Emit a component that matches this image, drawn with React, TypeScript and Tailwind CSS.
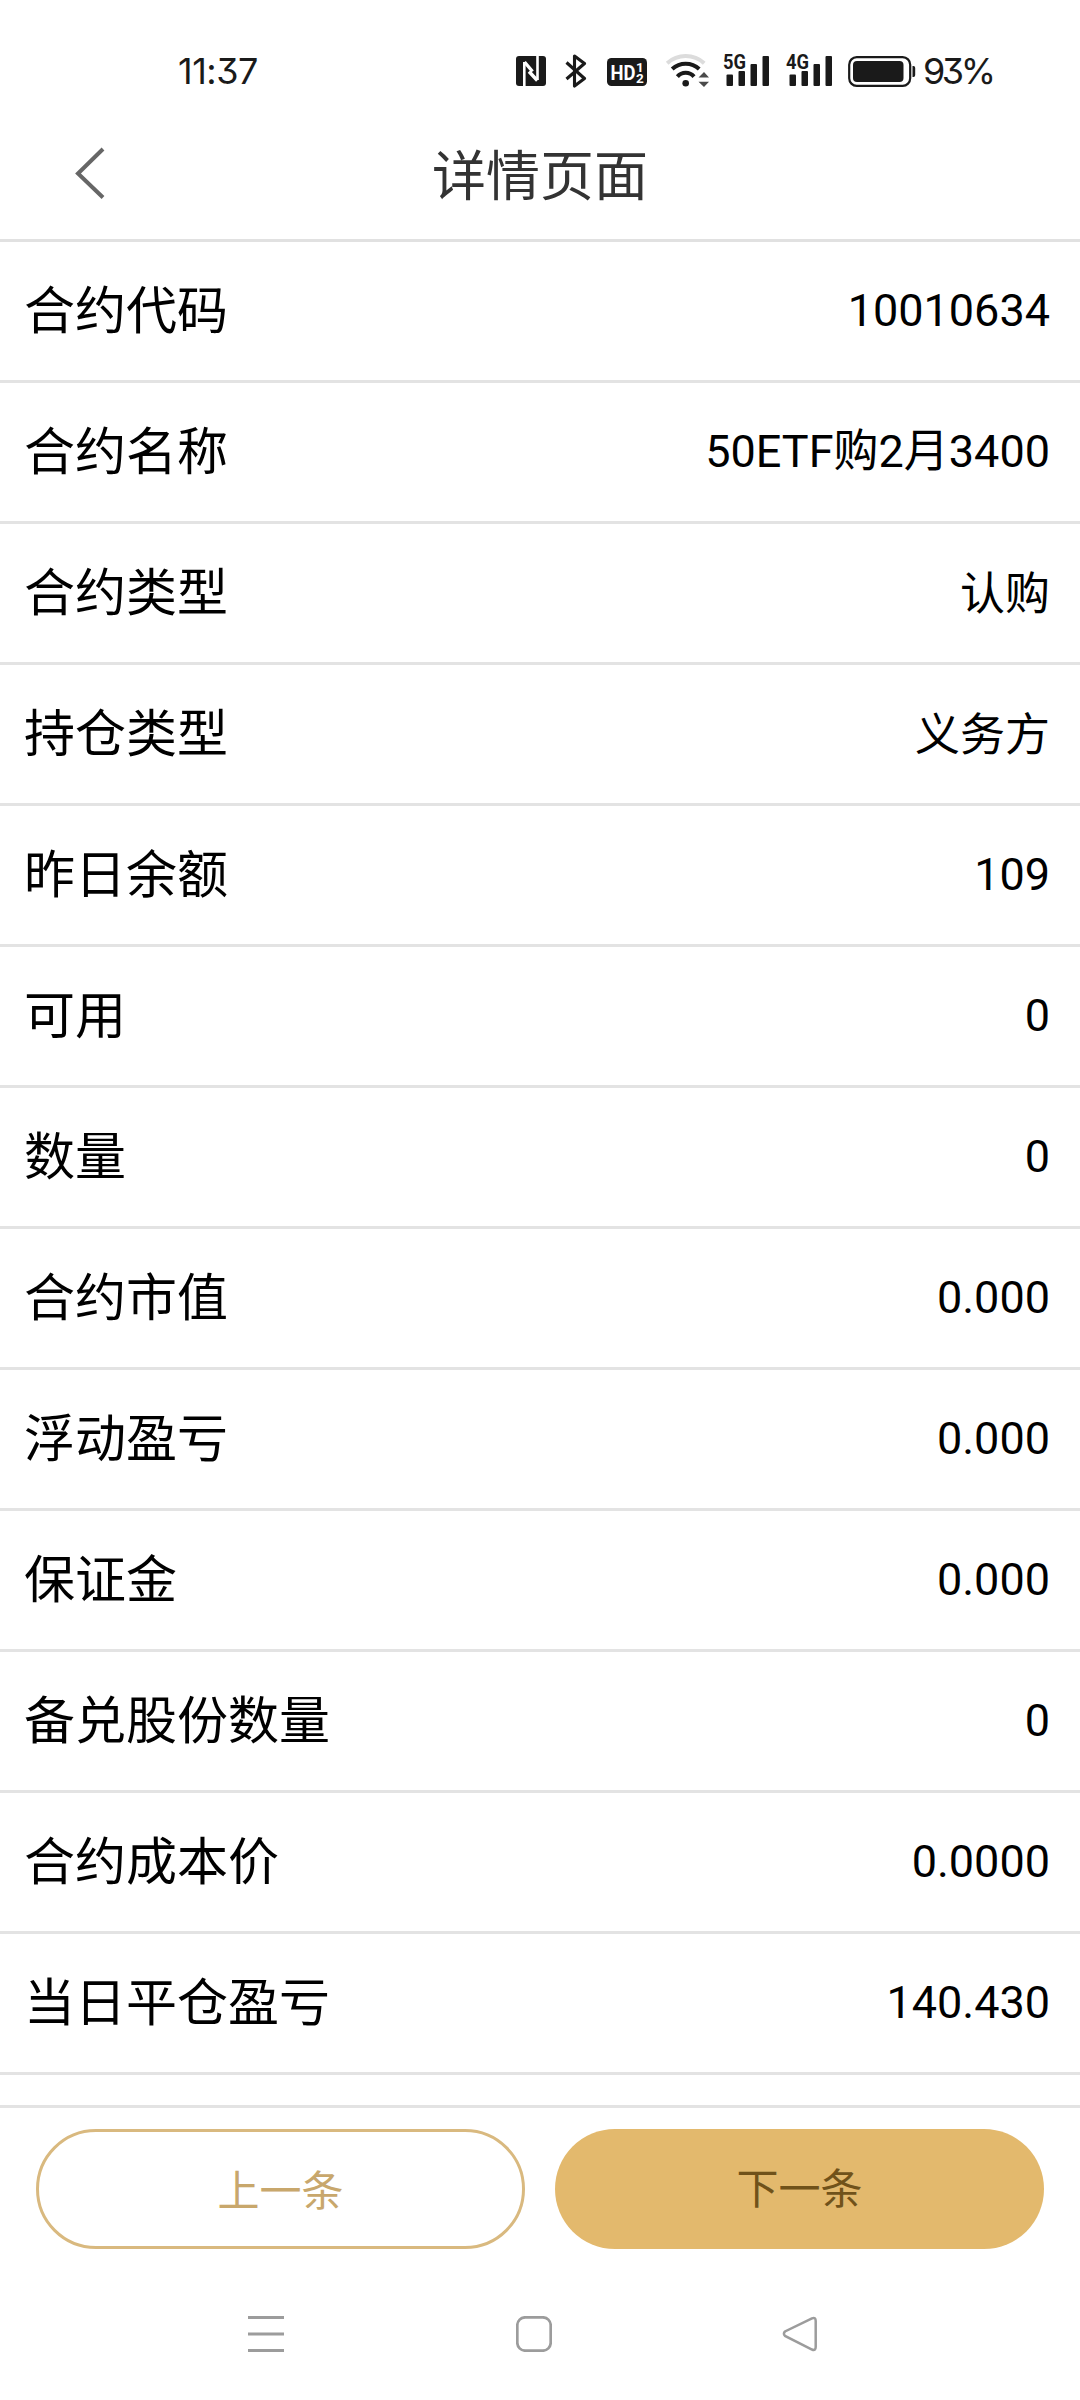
import type { ReactNode } from "react";

const CONTRACT_FIELDS = [
  { label: "合约代码", value: "10010634" },
  { label: "合约名称", value: "50ETF购2月3400" },
  { label: "合约类型", value: "认购" },
  { label: "持仓类型", value: "义务方" },
  { label: "昨日余额", value: "109" },
  { label: "可用", value: "0" },
  { label: "数量", value: "0" },
  { label: "合约市值", value: "0.000" },
  { label: "浮动盈亏", value: "0.000" },
  { label: "保证金", value: "0.000" },
  { label: "备兑股份数量", value: "0" },
  { label: "合约成本价", value: "0.0000" },
  { label: "当日平仓盈亏", value: "140.430" },
];

function NfcIcon() {
  return (
    <svg width="30" height="30" viewBox="0 0 30 30" className="mt-14">
      <rect width="30" height="30" rx="3" fill="#1a1a1a" />
      <g fill="none" stroke="#fff">
        <path d="M8.300 30V6M21.500 0V24" strokeWidth="2.600" />
        <path d="M8.500 6L16.500 15.500M13 15.500L21.300 24.500" strokeWidth="3.400" />
      </g>
    </svg>
  );
}

function BluetoothIcon() {
  return (
    <svg width="22" height="34" viewBox="0 0 22 34" className="mt-[54px] ml-[19px]">
      <path
        d="M1.500 8.500L19.500 24.500L9.500 32V2L19.500 9.500L1.500 25"
        fill="none"
        stroke="#1a1a1a"
        strokeWidth="3.100"
        strokeLinejoin="round"
      />
    </svg>
  );
}

function HdIcon() {
  return (
    <svg width="40" height="28" viewBox="0 0 40 28" className="mt-[58px] ml-5">
      <rect width="40" height="28" rx="4.500" fill="#1a1a1a" />
      <g fill="#fff" fontFamily="Roboto, sans-serif" fontWeight="700">
        <text x="3.500" y="22" fontSize="21" textLength="25" lengthAdjust="spacingAndGlyphs">
          HD
        </text>
        <text x="29" y="13.700" fontSize="13.500">1</text>
        <text x="29" y="24.800" fontSize="13.500">2</text>
      </g>
    </svg>
  );
}

function WifiIcon() {
  return (
    <svg width="44" height="34" viewBox="0 0 44 34" className="mt-[53px] ml-[18px]">
      <g fill="none" strokeWidth="4">
        <path d="M2.200 10.200A27.500 27.500 0 0 1 39.200 10.200" stroke="#dcdcdc" />
        <path d="M7.200 16A19.800 19.800 0 0 1 34.200 16" stroke="#1a1a1a" />
        <path d="M12.400 23.600A10.800 10.800 0 0 1 29 23.600" stroke="#1a1a1a" />
      </g>
      <circle cx="20.700" cy="30.300" r="3.300" fill="#1a1a1a" />
      <path d="M33.500 24.500L39 19L44 24.500zM33.500 28.700L39 34L44 28.700z" fill="#4a4a4a" />
    </svg>
  );
}

function SignalIcon({ network }: { network: string }) {
  return (
    <svg width="47" height="34" viewBox="0 0 47 34" className="overflow-visible">
      <g fill="#1a1a1a">
        <rect x="3.500" y="20.500" width="6.500" height="11.500" rx="1" />
        <rect x="15.500" y="17" width="6.500" height="15" rx="1" />
        <rect x="27.500" y="10" width="6.500" height="22" rx="1" />
        <rect x="39.500" y="2" width="6.500" height="30" rx="1" />
        <text
          x="0"
          y="14.700"
          fontFamily="Roboto, sans-serif"
          fontSize="20"
          fontWeight="700"
          textLength="23"
          lengthAdjust="spacingAndGlyphs"
        >
          {network}
        </text>
      </g>
    </svg>
  );
}

function BatteryIcon() {
  return (
    <svg width="68" height="31" viewBox="0 0 68 31" className="mt-14 ml-[15px]">
      <rect x="1.200" y="1.200" width="61" height="28.600" rx="7.500" fill="none" stroke="#1a1a1a" strokeWidth="2.200" />
      <rect x="5" y="5" width="50.500" height="21" rx="4" fill="#1a1a1a" />
      <path d="M64.500 10h1q1.700 0 1.700 2v7q0 2-1.700 2h-1z" fill="#1a1a1a" />
    </svg>
  );
}

function StatusBar() {
  return (
    <div className="flex h-[110px] items-start text-[36px] leading-none text-[#1a1a1a]">
      <span className="mt-[53px] ml-[178px] w-[338px] font-[Inter,sans-serif] tracking-[-0.5px] [font-feature-settings:'cv09']">
        11:37
      </span>
      <NfcIcon />
      <BluetoothIcon />
      <HdIcon />
      <WifiIcon />
      <div className="mt-[54px] ml-[14px] flex gap-4">
        <SignalIcon network="5G" />
        <SignalIcon network="4G" />
      </div>
      <BatteryIcon />
      <span className="mt-[53px] ml-[7px] font-[Inter,sans-serif] tracking-[-3.5px] [font-feature-settings:'cv09']">
        93%
      </span>
    </div>
  );
}

function Header() {
  return (
    <header className="grid h-[132px] grid-cols-[1fr_auto_1fr] items-start border-b-[3px] border-[#e1e1e1]">
      <button aria-label="返回" className="mt-[37px] ml-[75px] w-8">
        <svg width="32" height="53" viewBox="0 0 32 53">
          <path d="M28 2L3 26.500L28 50.500" fill="none" stroke="#666" strokeWidth="4" />
        </svg>
      </button>
      <h1 className="mt-[41px] text-[54px] leading-[54px] text-[#333]">详情页面</h1>
    </header>
  );
}

function FieldRow({ label, value }: { label: string; value: string }) {
  // digits sit lower in the line box than hanzi do
  const hasDigits = /\d/.test(value);

  return (
    <div className="flex h-[141px] items-center justify-between border-b-[3px] border-[#e3e3e3] pr-[30px] pl-6">
      <dt className="text-[51px] leading-none">{label}</dt>
      <dd className={`text-[45px] leading-none ${hasDigits ? "pb-px" : "pt-[3px]"}`}>{value}</dd>
    </div>
  );
}

function PagerButton({ className, children }: { className: string; children: ReactNode }) {
  return (
    <button className={`h-[120px] w-[489px] rounded-full text-[42px] leading-none ${className}`}>
      {children}
    </button>
  );
}

function NavBar() {
  return (
    <nav className="mt-[67px] flex pl-[248px]">
      <svg width="36" height="36" viewBox="0 0 36 36">
        <path d="M0 1.500h36M0 18h36M0 34.500h36" stroke="#9c9c9c" strokeWidth="3" />
      </svg>
      <svg width="36" height="36" viewBox="0 0 36 36" className="ml-[232px]">
        <rect x="1.300" y="1.300" width="33.400" height="33.400" rx="8" fill="none" stroke="#9c9c9c" strokeWidth="2.700" />
      </svg>
      <svg width="36" height="36" viewBox="0 0 36 36" className="ml-[230px]">
        <path
          d="M30 2.300L3 15.500Q0.800 17.700 3 19.900L30 33.500Q33.700 35 33.700 31V5Q33.700 0.800 30 2.300z"
          fill="none"
          stroke="#9c9c9c"
          strokeWidth="2.500"
        />
      </svg>
    </nav>
  );
}

export default function App() {
  return (
    <div className="flex h-[2400px] w-[1080px] flex-col overflow-hidden bg-white font-[Roboto,'Noto_Sans_CJK_SC',sans-serif] text-black">
      <StatusBar />
      <Header />
      <dl>
        {CONTRACT_FIELDS.map((f) => (
          <FieldRow key={f.label} label={f.label} value={f.value} />
        ))}
      </dl>
      <div className="mt-[30px] flex gap-[30px] border-t-[3px] border-[#e3e3e3] px-9 pt-[21px]">
        <PagerButton className="border-[3px] border-[#d9b97f] pt-[5px] text-[#c8a76c]">上一条</PagerButton>
        <PagerButton className="bg-[#e3b96d] pt-px text-[#70521a]">下一条</PagerButton>
      </div>
      <NavBar />
    </div>
  );
}
